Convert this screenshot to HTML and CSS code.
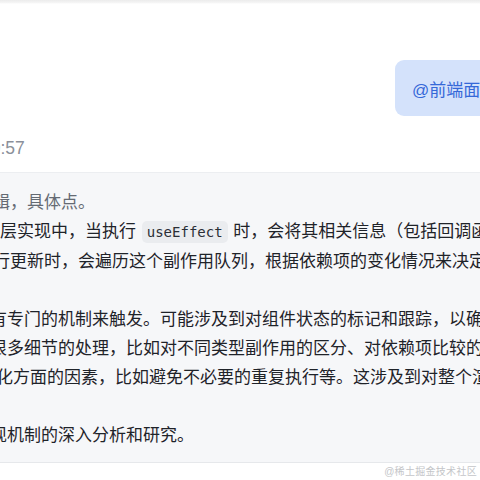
FILE: index.html
```html
<!DOCTYPE html>
<html lang="zh-CN">
  <head>
    <meta charset="UTF-8" />
    <meta name="viewport" content="width=device-width, initial-scale=1.0" />
    <title>对话</title>
    <link rel="stylesheet" href="styles.css">
  </head>
  <body>
    <div class="topbar"></div>

    <div class="chat">
      <div class="user-row">
        <div class="bubble">@前端面试官 请详细说明 useEffect 的底层实现逻辑</div>
      </div>

      <div class="time">10:57</div>

      <div class="answer">
        <div class="text">
          <p class="quote">
            <span class="line line--mid">辑，具体点。</span>
          </p>
          <p>
            <span class="line line--in">层实现中，当执行 <code>useEffect</code> 时，会将其相关信息（包括回调函数和依赖项）</span>
            <span class="line line--mid">行更新时，会遍历这个副作用队列，根据依赖项的变化情况来决定是否执行</span>
          </p>
          <p>
            <span class="line">有专门的机制来触发。可能涉及到对组件状态的标记和跟踪，以确保</span>
            <span class="line">很多细节的处理，比如对不同类型副作用的区分、对依赖项比较的优化</span>
            <span class="line line--near">化方面的因素，比如避免不必要的重复执行等。这涉及到对整个渲染流程</span>
          </p>
          <p>
            <span class="line">现机制的深入分析和研究。</span>
          </p>
        </div>
      </div>
    </div>

    <div class="watermark">@稀土掘金技术社区</div>
  </body>
</html>
```

FILE: styles.css
```css
* {
  box-sizing: border-box;
  margin: 0;
  padding: 0;
}

body {
  font-family: "Liberation Sans", "Noto Sans CJK SC", sans-serif;
  background: #fff;
  width: 480px;
  height: 480px;
  overflow: hidden;
  position: relative;
  color: #1f2329;
}

.topbar {
  height: 4px;
  background: linear-gradient(#ececec, #f4f4f4 60%, #fff);
}

.chat {
  display: flex;
  flex-direction: column;
}

.user-row {
  margin-top: 56px;
  padding-left: 395px;
  display: flex;
}

.bubble {
  height: 56px;
  padding: 0 17px;
  display: flex;
  align-items: center;
  background: #d4e2fb;
  border-radius: 9px;
  color: #3468d8;
  font-size: 17px;
  white-space: nowrap;
}

.time {
  margin-top: 21px;
  margin-left: -19px;
  font-size: 17.5px;
  line-height: 22px;
  color: #8a8f99;
}

.answer {
  margin-top: 13px;
  background: #f6f7f9;
  border-top: 1px solid #eceef1;
  border-bottom: 1px solid #e6e8eb;
  padding: 15px 0 12px;
}

.text {
  margin-left: -10px;
  font-size: 17px;
  line-height: 29px;
}

.text p {
  margin-bottom: 29px;
}

.text p.quote {
  margin-bottom: 0;
  color: #646a73;
}

.text p:last-child {
  margin-bottom: 0;
}

.line {
  display: block;
  white-space: nowrap;
}

.line--in {
  padding-left: 10px;
}

.line--mid {
  padding-left: 3px;
}

.line--near {
  padding-left: 6px;
}

.text code {
  font-family: "DejaVu Sans Mono", monospace;
  font-size: 14px;
  background: #eaecef;
  border-radius: 5px;
  padding: 3px 5px;
  margin: 0 1px;
  color: #2b2f36;
}

.watermark {
  position: absolute;
  right: 3px;
  top: 463px;
  font-size: 10px;
  color: #c4c6c9;
  letter-spacing: 0.3px;
}
```
